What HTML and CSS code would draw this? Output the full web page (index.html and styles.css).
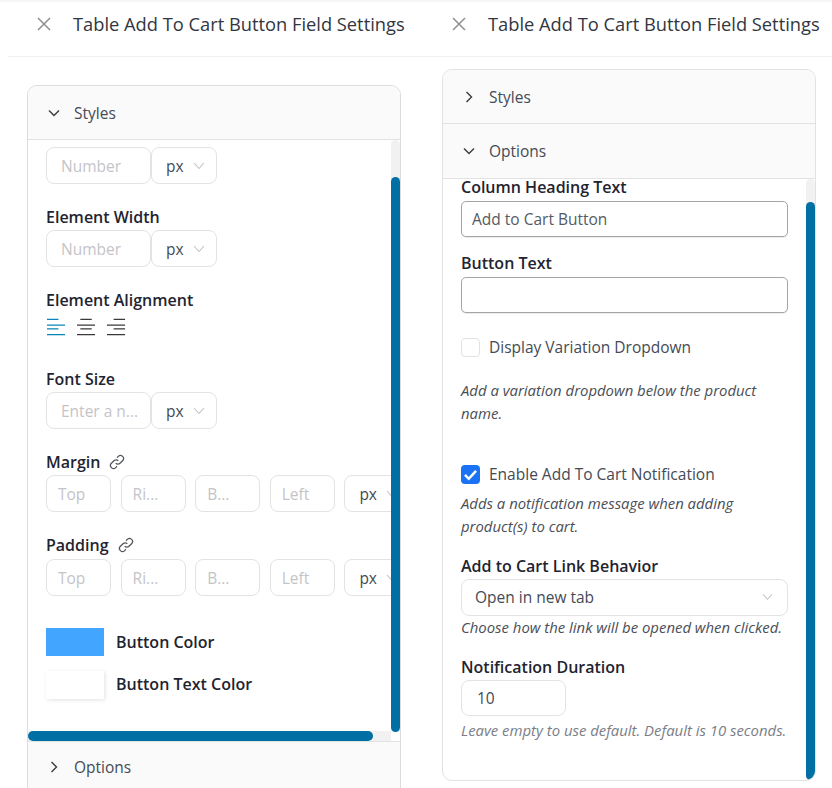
FILE: index.html
```html
<!DOCTYPE html>
<html lang="en">
<head>
<meta charset="utf-8">
<title>Table Add To Cart Button Field Settings</title>
<link rel="stylesheet" href="styles.css">
</head>
<body>
<main class="page">
  <section class="pane pane-left">
    <header class="head">
      <svg class="close" viewBox="0 0 14 14"><path d="M1 1l12 12M13 1L1 13"/></svg>
      <h1 class="title">Table Add To Cart Button Field Settings</h1>
    </header>
    <div class="card card-left">
      <div class="acc acc-styles-open">
        <svg class="chev" viewBox="0 0 12 12"><path d="M1 3.5l5 5 5-5"/></svg>
        <span>Styles</span>
      </div>
      <div class="body body-left">
        <div class="bar-v-track bar-left-track"></div>
        <div class="bar-v bar-left"></div>
        <div class="bar-h-track"></div>
        <div class="bar-h"></div>
        <div class="unit-row">
          <div class="box box-num ph">Number</div>
          <div class="box box-unit">px<svg class="mini" viewBox="0 0 12 8"><path d="M1 1l5 5.5L11 1"/></svg></div>
        </div>
        <div class="label gap-a">Element Width</div>
        <div class="unit-row">
          <div class="box box-num ph">Number</div>
          <div class="box box-unit">px<svg class="mini" viewBox="0 0 12 8"><path d="M1 1l5 5.5L11 1"/></svg></div>
        </div>
        <div class="label gap-a">Element Alignment</div>
        <div class="aligns">
          <svg class="align align-on" viewBox="0 0 20 18"><path d="M0 1h12M0 7h19M0 11h12M0 17h19"/></svg>
          <svg class="align" viewBox="0 0 20 18"><path d="M3.500 1h12M0 7h19M3.500 11h12M0 17h19"/></svg>
          <svg class="align" viewBox="0 0 20 18"><path d="M7 1h12M0 7h19M7 11h12M0 17h19"/></svg>
        </div>
        <div class="label gap-b">Font Size</div>
        <div class="unit-row">
          <div class="box box-num ph">Enter a n...</div>
          <div class="box box-unit">px<svg class="mini" viewBox="0 0 12 8"><path d="M1 1l5 5.5L11 1"/></svg></div>
        </div>
        <div class="label gap-c">Margin <svg class="link" viewBox="0 0 16 16"><path d="M6.7 9.3a3 3 0 0 0 4.3 0l2.6-2.6a3 3 0 0 0-4.3-4.3L8 3.7M9.3 6.7a3 3 0 0 0-4.3 0L2.4 9.3a3 3 0 0 0 4.3 4.3L8 12.3"/></svg></div>
        <div class="four">
          <div class="box box-side ph">Top</div>
          <div class="box box-side ph">Ri...</div>
          <div class="box box-side ph">B...</div>
          <div class="box box-side ph">Left</div>
          <div class="box box-side-unit">px<svg class="mini" viewBox="0 0 12 8"><path d="M1 1l5 5.5L11 1"/></svg></div>
        </div>
        <div class="label gap-a">Padding <svg class="link" viewBox="0 0 16 16"><path d="M6.7 9.3a3 3 0 0 0 4.3 0l2.6-2.6a3 3 0 0 0-4.3-4.3L8 3.7M9.3 6.7a3 3 0 0 0-4.3 0L2.4 9.3a3 3 0 0 0 4.3 4.3L8 12.3"/></svg></div>
        <div class="four four-tight">
          <div class="box box-side ph">Top</div>
          <div class="box box-side ph">Ri...</div>
          <div class="box box-side ph">B...</div>
          <div class="box box-side ph">Left</div>
          <div class="box box-side-unit">px<svg class="mini" viewBox="0 0 12 8"><path d="M1 1l5 5.5L11 1"/></svg></div>
        </div>
        <div class="color color-first"><span class="swatch swatch-blue"></span><span class="color-name">Button Color</span></div>
        <div class="color color-next"><span class="swatch swatch-white"></span><span class="color-name">Button Text Color</span></div>
      </div>
      <div class="acc acc-options-closed">
        <svg class="chev" viewBox="0 0 12 12"><path d="M3.5 1l5 5-5 5"/></svg>
        <span>Options</span>
      </div>
    </div>
  </section>

  <section class="pane pane-right">
    <header class="head">
      <svg class="close" viewBox="0 0 14 14"><path d="M1 1l12 12M13 1L1 13"/></svg>
      <h1 class="title">Table Add To Cart Button Field Settings</h1>
    </header>
    <div class="card card-right">
      <div class="acc acc-a">
        <svg class="chev" viewBox="0 0 12 12"><path d="M3.5 1l5 5-5 5"/></svg>
        <span>Styles</span>
      </div>
      <div class="acc acc-b">
        <svg class="chev" viewBox="0 0 12 12"><path d="M1 3.5l5 5 5-5"/></svg>
        <span>Options</span>
      </div>
      <div class="body body-right">
        <div class="bar-v-track bar-right-track"></div>
        <div class="bar-v bar-right"></div>
        <div class="label label-first">Column Heading Text</div>
        <div class="box text-box">Add to Cart Button</div>
        <div class="label gap-d">Button Text</div>
        <div class="box text-box"></div>
        <div class="check check-first"><span class="tick"></span><span>Display Variation Dropdown</span></div>
        <p class="help help-first">Add a variation dropdown below the product name.</p>
        <div class="check check-second">
          <span class="tick tick-on"><svg viewBox="0 0 12 12"><path d="M2.5 6.3l2.4 2.4 4.6-5"/></svg></span>
          <span>Enable Add To Cart Notification</span>
        </div>
        <p class="help help-second">Adds a notification message when adding product(s) to cart.</p>
        <div class="label gap-e">Add to Cart Link Behavior</div>
        <div class="box select-box">Open in new tab<svg class="mini mini-wide" viewBox="0 0 12 8"><path d="M1 1l5 5.5L11 1"/></svg></div>
        <p class="help help-third">Choose how the link will be opened when clicked.</p>
        <div class="label gap-f">Notification Duration</div>
        <div class="box duration">10</div>
        <p class="help help-fourth">Leave empty to use default. Default is 10 seconds.</p>
      </div>
    </div>
  </section>
</main>
</body>
</html>
```

FILE: styles.css
```css
* { box-sizing: border-box; }
html, body { margin: 0; height: 788px; overflow: hidden; background: #fff; }
body { font-family: "Open Sans", "Noto Sans", sans-serif; color: #1e1e1e; }
.page { display: flex; width: 832px; height: 788px; padding-left: 8px; overflow: hidden; background: linear-gradient(#f3f3f3, #fff 3px); }
.pane { display: flex; flex-direction: column; flex: none; }
.pane-left { width: 416px; }
.pane-right { width: 408px; }

.head { display: flex; align-items: center; flex: none; height: 57px; border-bottom: 1px solid #f1f1f1; padding-bottom: 9px; }
.pane-left .head { padding-left: 29px; }
.pane-right .head { padding-left: 28px; }
.close { width: 14px; height: 14px; fill: none; stroke: #8f8f8f; stroke-width: 1.5; flex: none; }
.title { margin: 0 0 0 22px; font-size: 18.3px; font-weight: 500; line-height: 24px; color: #32363f; white-space: nowrap; }

.card { border: 1px solid #dcdcdc; border-radius: 10px; background: #fff; width: 374px; overflow: hidden; flex: none; }
.card-left { margin: 28px 0 0 19px; height: 712px; }
.card-right { margin: 12px 0 0 18px; height: 712px; border-color: #e2e2e2; }

.acc { display: flex; align-items: center; gap: 14px; padding-left: 20px; background: #fafafa; border-bottom: 1px solid #e2e2e2; font-size: 15.5px; color: #444a55; flex: none; }
.acc-styles-open { height: 54px; }
.acc-options-closed { height: 51px; border-bottom: 0; border-top: 1px solid #e2e2e2; }
.acc-a { height: 54px; }
.acc-b { height: 55px; }
.chev { width: 12px; height: 12px; fill: none; stroke: #3b3b3b; stroke-width: 1.4; flex: none; }

.body { position: relative; }
.body-left { height: 601px; padding: 7px 0 0 18px; overflow: hidden; }
.body-right { height: 602px; padding: 0 0 0 18px; }

.label { font-size: 16px; font-weight: 600; line-height: 20px; margin-bottom: 3px; color: #1f2430; white-space: nowrap; display: flex; align-items: center; gap: 9px; height: 20px; }
.label-first { height: 16px; line-height: 16px; margin-bottom: 6px; }
.gap-a { margin-top: 23px; }
.gap-b { margin-top: 33px; }
.gap-c { margin-top: 23px; }
.gap-d { margin-top: 16px; margin-bottom: 4px; }
.gap-e { margin-top: 17.5px; }
.gap-f { margin-top: 18.5px; }
.link { width: 16px; height: 16px; fill: none; stroke: #55585e; stroke-width: 1.3; }

.box { display: flex; align-items: center; flex: none; height: 37px; border: 1px solid #e3e3e3; border-radius: 8px; background: #fff; font-size: 15.5px; color: #444a55; }
.ph { color: #c4c4c8; }
.unit-row { display: flex; }
.box-num { width: 105px; padding-left: 14px; }
.box-unit { width: 66px; padding-left: 14px; gap: 9px; }
.mini { width: 12px; height: 8px; fill: none; stroke: #c2c2c2; stroke-width: 1.1; }
.four { display: flex; gap: 9.3px; width: 400px; }
.four-tight { margin-top: 4px; }
.box-side { width: 65.3px; padding-left: 11px; }
.box-side-unit { width: 66px; padding-left: 14px; gap: 9px; }

.aligns { display: flex; gap: 11px; margin-top: 8px; margin-left: 1px; height: 18px; }
.align { width: 19px; height: 18px; fill: none; stroke: #3a3a3a; stroke-width: 1.3; }
.align-on { stroke: #0b84b8; }

.color { display: flex; align-items: center; gap: 12px; height: 28px; font-size: 16px; font-weight: 600; color: #1f2430; }
.color-first { margin-top: 32px; }
.color-next { margin-top: 15px; }
.color-first .color-name { margin-bottom: 1px; }
.color-next .color-name { margin-bottom: 3px; }
.swatch { width: 58px; height: 28px; flex: none; }
.swatch-blue { background: #42a5ff; }
.swatch-white { background: #fff; box-shadow: 1px 1px 4px rgba(0,0,0,.12); }

.bar-v-track, .bar-v, .bar-h-track, .bar-h { position: absolute; }
.bar-v-track { right: 0; top: 0; width: 9px; background: #f1f1f1; border-radius: 5px 5px 0 0; }
.bar-v { right: 0; width: 9px; background: #0070a4; border-radius: 5px; }
.bar-left-track { height: 592px; }
.bar-left { top: 37px; height: 555px; }
.bar-right-track { height: 601px; }
.bar-right { top: 23px; height: 578px; }
.bar-h-track { left: 0; bottom: 0; width: 363px; height: 10px; background: #f1f1f1; }
.bar-h { left: 0; bottom: 0; width: 345px; height: 10px; background: #0070a4; border-radius: 5px; }

.text-box { width: 327px; height: 36px; padding-left: 10px; border-color: #a3a5a9; border-radius: 5px; box-shadow: 0 1px 1px rgba(0,0,0,.08); color: #555a63; }
.check { display: flex; align-items: center; gap: 9px; height: 20px; font-size: 15.5px; color: #444a55; }
.check-first { margin-top: 24px; }
.check-second { margin-top: 39px; }
.tick { display: flex; width: 19px; height: 19px; border: 1px solid #e2e2e2; border-radius: 4px; background: #fff; flex: none; }
.tick-on { border: 0; background: #1a73f5; }
.tick-on svg { width: 19px; height: 19px; fill: none; stroke: #fff; stroke-width: 1.6; }

.help { margin: 0; width: 327px; font-size: 14.9px; line-height: 23px; font-style: italic; color: #4a4e57; }
.help-first { margin-top: 22px; }
.help-second { margin-top: 8px; }
.help-third { white-space: nowrap; }
.help-fourth { margin-top: 3px; white-space: nowrap; color: #7a7e86; }
.select-box { width: 327px; height: 37px; padding: 0 14px 0 13px; justify-content: space-between; }
.mini-wide { width: 11px; }
.duration { width: 105px; height: 36px; padding-left: 15px; }
```
